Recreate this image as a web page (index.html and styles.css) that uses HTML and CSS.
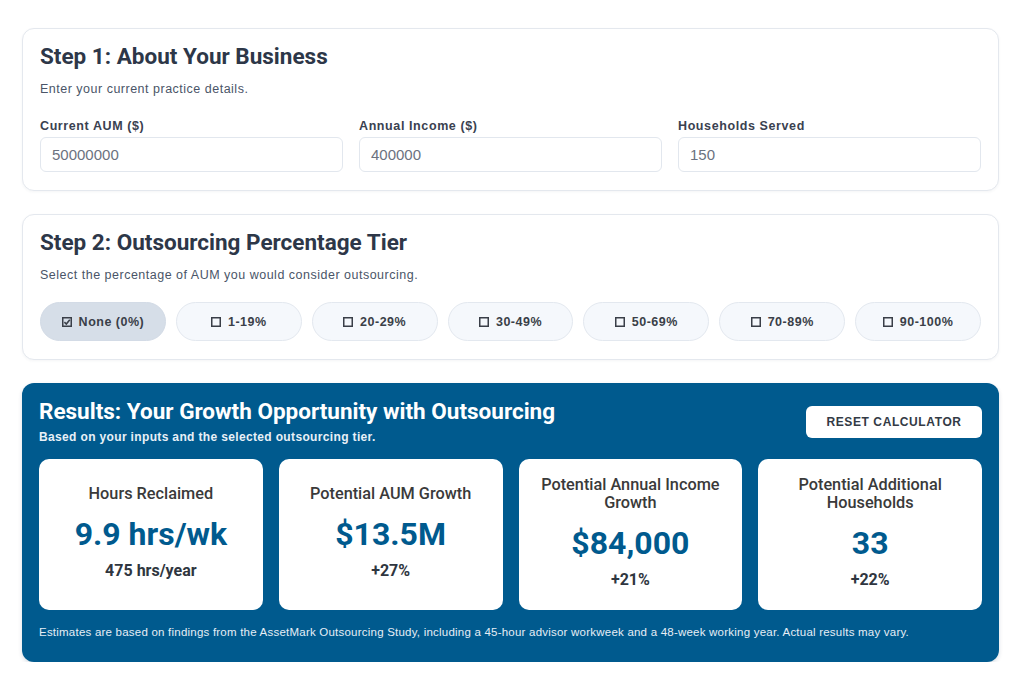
FILE: index.html
```html
<!DOCTYPE html>
<html lang="en">
<head>
<meta charset="utf-8">
<title>Outsourcing Growth Calculator</title>
<link rel="stylesheet" href="styles.css">
</head>
<body>
<main class="calc">
  <section class="card">
    <h2 class="card-title">Step 1: About Your Business</h2>
    <p class="card-sub">Enter your current practice details.</p>
    <div class="fields">
      <label class="field">
        <span class="field-label">Current AUM ($)</span>
        <input class="field-input" type="text" value="50000000">
      </label>
      <label class="field">
        <span class="field-label">Annual Income ($)</span>
        <input class="field-input" type="text" value="400000">
      </label>
      <label class="field">
        <span class="field-label">Households Served</span>
        <input class="field-input" type="text" value="150">
      </label>
    </div>
  </section>

  <section class="card">
    <h2 class="card-title">Step 2: Outsourcing Percentage Tier</h2>
    <p class="card-sub">Select the percentage of AUM you would consider outsourcing.</p>
    <div class="tiers">
      <button class="tier tier-active"><svg class="box" viewBox="0 0 10 10"><rect x="0.75" y="0.75" width="8.5" height="8.5" fill="none" stroke="#3a3f48" stroke-width="1.5"/><path d="M2.4 5.2 L4.3 7 L7.8 2.8" fill="none" stroke="#3a3f48" stroke-width="1.6"/></svg>None (0%)</button>
      <button class="tier"><svg class="box" viewBox="0 0 10 10"><rect x="0.75" y="0.75" width="8.5" height="8.5" fill="none" stroke="#3a3f48" stroke-width="1.5"/></svg>1-19%</button>
      <button class="tier"><svg class="box" viewBox="0 0 10 10"><rect x="0.75" y="0.75" width="8.5" height="8.5" fill="none" stroke="#3a3f48" stroke-width="1.5"/></svg>20-29%</button>
      <button class="tier"><svg class="box" viewBox="0 0 10 10"><rect x="0.75" y="0.75" width="8.5" height="8.5" fill="none" stroke="#3a3f48" stroke-width="1.5"/></svg>30-49%</button>
      <button class="tier"><svg class="box" viewBox="0 0 10 10"><rect x="0.75" y="0.75" width="8.5" height="8.5" fill="none" stroke="#3a3f48" stroke-width="1.5"/></svg>50-69%</button>
      <button class="tier"><svg class="box" viewBox="0 0 10 10"><rect x="0.75" y="0.75" width="8.5" height="8.5" fill="none" stroke="#3a3f48" stroke-width="1.5"/></svg>70-89%</button>
      <button class="tier"><svg class="box" viewBox="0 0 10 10"><rect x="0.75" y="0.75" width="8.5" height="8.5" fill="none" stroke="#3a3f48" stroke-width="1.5"/></svg>90-100%</button>
    </div>
  </section>

  <section class="results">
    <div class="results-head">
      <div>
        <h2 class="results-title">Results: Your Growth Opportunity with Outsourcing</h2>
        <p class="results-sub">Based on your inputs and the selected outsourcing tier.</p>
      </div>
      <button class="reset">RESET CALCULATOR</button>
    </div>
    <div class="metrics">
      <div class="metric">
        <div class="metric-title">Hours Reclaimed</div>
        <div class="metric-value">9.9 hrs/wk</div>
        <div class="metric-note">475 hrs/year</div>
      </div>
      <div class="metric">
        <div class="metric-title">Potential AUM Growth</div>
        <div class="metric-value">$13.5M</div>
        <div class="metric-note">+27%</div>
      </div>
      <div class="metric">
        <div class="metric-title">Potential Annual Income Growth</div>
        <div class="metric-value">$84,000</div>
        <div class="metric-note">+21%</div>
      </div>
      <div class="metric">
        <div class="metric-title">Potential Additional Households</div>
        <div class="metric-value">33</div>
        <div class="metric-note">+22%</div>
      </div>
    </div>
    <p class="results-foot">Estimates are based on findings from the AssetMark Outsourcing Study, including a 45-hour advisor workweek and a 48-week working year. Actual results may vary.</p>
  </section>
</main>
</body>
</html>
```

FILE: styles.css
```css
* { box-sizing: border-box; }

html, body {
  margin: 0;
  padding: 0;
  background: #ffffff;
}

body {
  font-family: "Liberation Sans", Arial, sans-serif;
  color: #2d3748;
}

.calc {
  width: 977px;
  margin: 28px 0 0 22px;
  display: flex;
  flex-direction: column;
  gap: 23px;
}

.card {
  background: #ffffff;
  border: 1px solid #e4e8ee;
  border-radius: 12px;
  padding: 15px 17px 18px;
  box-shadow: 0 1px 3px rgba(30, 50, 80, 0.05);
}

.card-title {
  margin: 0;
  font-family: Roboto, "Liberation Sans", sans-serif;
  font-weight: 700;
  font-size: 22.5px;
  line-height: 24px;
  color: #2d3748;
}

.card-sub {
  margin: 13px 0 0;
  font-size: 12.5px;
  line-height: 16px;
  color: #4a5568;
  letter-spacing: 0.5px;
}

.fields {
  margin-top: 21px;
  display: grid;
  grid-template-columns: repeat(3, 1fr);
  gap: 16px;
}

.field {
  display: flex;
  flex-direction: column;
  gap: 3px;
}

.field-label {
  font-size: 12.5px;
  line-height: 16px;
  font-weight: 700;
  color: #3a4150;
  letter-spacing: 0.6px;
}

.field-input {
  height: 35px;
  border: 1.5px solid #e2e7ee;
  border-radius: 6px;
  padding: 0 11px;
  font-family: "Liberation Sans", Arial, sans-serif;
  font-size: 15px;
  color: #6b7280;
  background: #ffffff;
  outline: none;
}

.tiers {
  margin-top: 19px;
  display: grid;
  grid-template-columns: repeat(7, 1fr);
  gap: 10px;
}

.tier {
  height: 39px;
  border: 1.5px solid #e3e8ef;
  border-radius: 20px;
  background: #f5f8fc;
  font-family: "Liberation Sans", Arial, sans-serif;
  font-weight: 700;
  font-size: 12.5px;
  letter-spacing: 0.5px;
  color: #3a3f48;
  display: flex;
  align-items: center;
  justify-content: center;
  gap: 7px;
  padding: 0;
}

.tier-active {
  background: #d6dee8;
  border-color: #d3dbe6;
}

.box {
  width: 10px;
  height: 10px;
  flex: none;
}

.results {
  background: #005a8e;
  border-radius: 12px;
  padding: 16px 17px 23px;
  color: #ffffff;
  box-shadow: 0 2px 4px rgba(0, 40, 80, 0.15);
}

.results-head {
  display: flex;
  align-items: center;
  justify-content: space-between;
}

.results-title {
  margin: 0;
  font-family: Roboto, "Liberation Sans", sans-serif;
  font-weight: 700;
  font-size: 22.5px;
  line-height: 24px;
}

.results-sub {
  margin: 7px 0 0;
  font-size: 12px;
  line-height: 14px;
  font-weight: 700;
  letter-spacing: 0.35px;
  color: #e8f0f7;
}

.reset {
  width: 176px;
  height: 32px;
  border: none;
  border-radius: 6px;
  background: #ffffff;
  font-family: "Liberation Sans", Arial, sans-serif;
  font-weight: 700;
  font-size: 12px;
  letter-spacing: 0.6px;
  color: #333a45;
  padding: 0;
}

.metrics {
  margin-top: 15px;
  display: grid;
  grid-template-columns: repeat(4, 1fr);
  gap: 16px;
}

.metric {
  height: 151px;
  background: #ffffff;
  border-radius: 10px;
  padding: 12px 14px 16px;
  display: flex;
  flex-direction: column;
  align-items: center;
  justify-content: center;
  text-align: center;
}

.metric-title {
  font-family: Roboto, "Liberation Sans", sans-serif;
  font-size: 16.3px;
  line-height: 18px;
  font-weight: 500;
  color: #3a3a3a;
}

.metric-value {
  margin-top: 13px;
  font-family: Roboto, "Liberation Sans", sans-serif;
  font-size: 32px;
  line-height: 36px;
  font-weight: 700;
  color: #005a8e;
}

.metric-note {
  margin-top: 10px;
  font-family: Roboto, "Liberation Sans", sans-serif;
  font-size: 16px;
  line-height: 18px;
  font-weight: 700;
  color: #2f3640;
}

.results-foot {
  margin: 15px 0 0;
  font-size: 11.5px;
  line-height: 14px;
  letter-spacing: 0.22px;
  color: #e6eef6;
}
```
